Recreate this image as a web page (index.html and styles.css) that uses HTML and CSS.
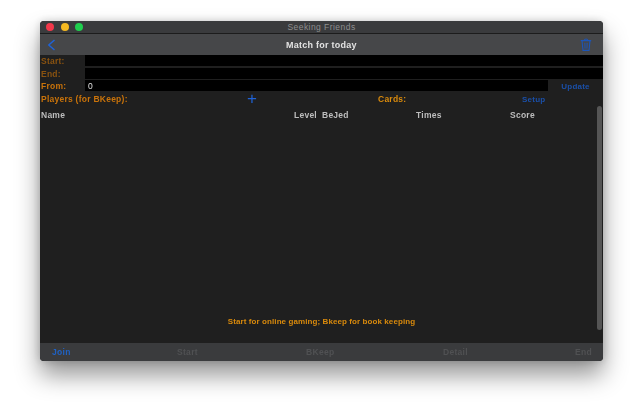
FILE: index.html
```html
<!DOCTYPE html>
<html lang="en">
<head>
  <meta charset="UTF-8" />
  <title>Seeking Friends</title>
  <link rel="stylesheet" href="styles.css">
</head>
<body>
  <div class="window">

    <!-- Title bar -->
    <div class="titlebar">
      <div class="lights">
        <span class="light red"></span>
        <span class="light yellow"></span>
        <span class="light green"></span>
      </div>
      <div class="window-title">Seeking Friends</div>
    </div>

    <!-- Toolbar -->
    <div class="toolbar">
      <div class="toolbar-side left">
        <svg class="back-icon" viewBox="0 0 9 12" width="9" height="12">
          <path d="M7.5 1 L1.8 6 L7.5 11" fill="none" stroke="#1f62d6" stroke-width="1.5" />
        </svg>
      </div>
      <div class="toolbar-title">Match for today</div>
      <div class="toolbar-side right">
        <svg class="trash-icon" viewBox="0 0 12 13" width="12" height="13">
          <path d="M0.8 2.6 H11.2 M4.3 2.4 C4.3 0.6 7.7 0.6 7.7 2.4 M2 2.8 L3 12.4 H9 L10 2.8" fill="none" stroke="#1c55b8" stroke-width="1.1" />
          <path d="M4.6 4.8 L4.9 10.6 M6 4.8 V10.6 M7.4 4.8 L7.1 10.6" fill="none" stroke="#1c55b8" stroke-width="0.7" />
        </svg>
      </div>
    </div>

    <!-- Fields -->
    <div class="fields">
      <div class="field-row">
        <label class="field-label dim">Start:</label>
        <div class="field"></div>
      </div>
      <div class="field-row">
        <label class="field-label dim">End:</label>
        <div class="field"></div>
      </div>
      <div class="field-row">
        <label class="field-label">From:</label>
        <div class="field">0</div>
        <div class="update-link">Update</div>
      </div>
    </div>

    <div class="players-row">
      <div class="players-label">Players (for BKeep):</div>
      <div class="plus">+</div>
      <div class="cards-label">Cards:</div>
      <div class="setup-link">Setup</div>
    </div>

    <!-- Table -->
    <div class="table-head">
      <div class="col-name">Name</div>
      <div class="col-level">Level</div>
      <div class="col-bejed">BeJed</div>
      <div class="col-times">Times</div>
      <div class="col-score">Score</div>
    </div>

    <div class="table-body">
      <div class="message">Start for online gaming; Bkeep for book keeping</div>
      <div class="scrollbar"></div>
    </div>

    <!-- Bottom bar -->
    <div class="bottom-bar">
      <div class="btn btn-join">Join</div>
      <div class="btn btn-start">Start</div>
      <div class="btn btn-bkeep">BKeep</div>
      <div class="btn btn-detail">Detail</div>
      <div class="btn btn-end">End</div>
    </div>

  </div>
</body>
</html>
```

FILE: styles.css
```css
html, body {
  height: 100%;
}

body {
  margin: 0;
  padding: 21px 0 0 40px;
  box-sizing: border-box;
  background-color: #fff;
  font-family: 'Liberation Sans', Arial, sans-serif;
  font-size: 8.5px;
  font-weight: bold;
  overflow: hidden;
}

.window {
  width: 563px;
  height: 340px;
  background-color: #1f1f1f;
  border-radius: 4px;
  box-shadow: 0 14px 24px rgba(0, 0, 0, 0.42), 0 0 8px rgba(0, 0, 0, 0.18);
  overflow: hidden;
  display: flex;
  flex-direction: column;
  filter: blur(0.35px);
}

.titlebar {
  height: 12px;
  flex-shrink: 0;
  background-color: #3a3b3d;
  border-bottom: 1px solid #1c1c1c;
  display: flex;
  align-items: center;
  justify-content: center;
  position: relative;
}

.lights {
  position: absolute;
  left: 6px;
  top: 2px;
  display: flex;
  gap: 6.5px;
}

.light {
  width: 8px;
  height: 8px;
  border-radius: 50%;
}

.red { background-color: #f2384a; }
.yellow { background-color: #f5b921; }
.green { background-color: #1fcf4e; }

.window-title {
  color: #8e8e8e;
  font-size: 8.5px;
  font-weight: normal;
  letter-spacing: 0.45px;
}

.toolbar {
  height: 21px;
  flex-shrink: 0;
  background-color: #464749;
  display: flex;
  align-items: center;
  justify-content: space-between;
  padding: 0 11px 0 7px;
}

.toolbar-side {
  display: flex;
}

.toolbar-side.left {
  width: 34px;
}

.toolbar-side.right {
  width: 30px;
  justify-content: flex-end;
}

.toolbar-title {
  color: #e2e2e2;
  font-size: 9px;
  letter-spacing: 0.25px;
}

.back-icon,
.trash-icon {
  display: block;
}

.fields {
  display: flex;
  flex-direction: column;
  gap: 1.5px;
}

.field-row {
  display: flex;
  align-items: center;
  height: 11px;
}

.field-label {
  width: 45px;
  flex-shrink: 0;
  padding: 1px 0 0 1px;
  box-sizing: border-box;
  color: #c9730a;
  letter-spacing: 0.25px;
}

.field-label.dim {
  color: #8a5310;
}

.field {
  flex-grow: 1;
  height: 100%;
  background-color: #000;
  color: #e0e0e0;
  font-size: 8.5px;
  font-weight: normal;
  line-height: 12px;
  padding-left: 3px;
}

.update-link {
  width: 55px;
  flex-shrink: 0;
  padding-top: 2px;
  text-align: center;
  color: #1a4fa8;
  font-size: 8px;
  letter-spacing: 0.2px;
}

.players-row {
  height: 14px;
  flex-shrink: 0;
  box-sizing: border-box;
  padding: 2px 0 0 1px;
  display: flex;
  align-items: center;
  letter-spacing: 0.25px;
}

.players-label {
  width: 206px;
  color: #c9730a;
}

.plus {
  width: 131px;
  color: #1f62d6;
  font-size: 17px;
  font-weight: normal;
  line-height: 12px;
}

.cards-label {
  width: 144px;
  color: #d98a0c;
}

.setup-link {
  color: #1a4fa8;
  font-size: 8px;
}

.table-head {
  height: 18px;
  flex-shrink: 0;
  box-sizing: border-box;
  padding: 2px 0 0 1px;
  display: flex;
  align-items: center;
  color: #bdbdbd;
  letter-spacing: 0.25px;
}

.col-name { width: 253px; }
.col-level { width: 28px; }
.col-bejed { width: 94px; }
.col-times { width: 94px; }

.table-body {
  flex-grow: 1;
  position: relative;
  display: flex;
  flex-direction: column;
  justify-content: flex-end;
  padding-bottom: 16px;
}

.message {
  text-align: center;
  color: #d98a0c;
  font-size: 8px;
  letter-spacing: 0.09px;
  line-height: 10px;
}

.scrollbar {
  position: absolute;
  right: 1px;
  top: -17px;
  width: 5px;
  height: 224px;
  border-radius: 2.5px;
  background-color: #555;
}

.bottom-bar {
  height: 18px;
  flex-shrink: 0;
  background-color: #3a3b3d;
  display: flex;
  align-items: center;
  letter-spacing: 0.3px;
  color: #505153;
}

.btn-join { width: 125px; padding-left: 12px; color: #1f62c4; }
.btn-start { width: 129px; }
.btn-bkeep { width: 137px; }
.btn-detail { width: 132px; }
```
